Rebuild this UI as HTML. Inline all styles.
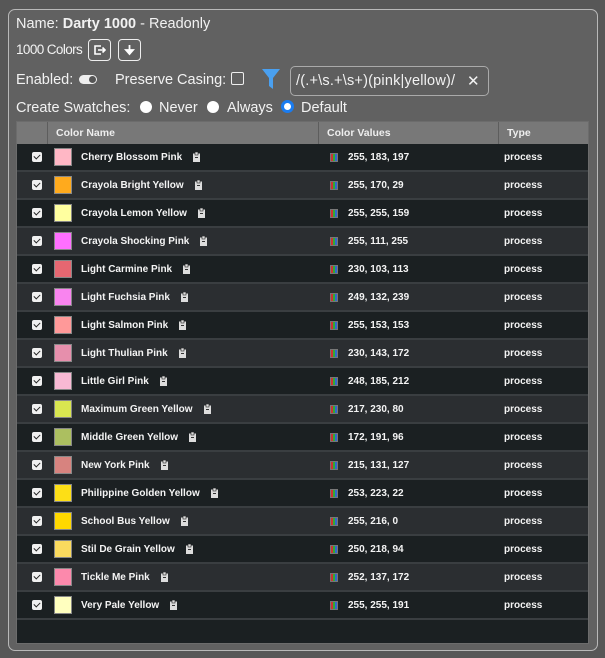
<!DOCTYPE html>
<html><head><meta charset="utf-8"><style>
*{box-sizing:border-box;margin:0;padding:0}
body{width:605px;height:658px;background:#575757;font-family:"Liberation Sans",sans-serif;color:#fff;position:relative;overflow:hidden}
.panel{position:absolute;left:8px;top:9px;width:590px;height:642px;border:1px solid #b8b8b8;border-radius:7px;background:#616161}
.t{position:absolute;font-size:14.5px;color:#f2f2f2;white-space:nowrap}
.btn{position:absolute;width:23px;height:22px;border:1px solid #eee;border-radius:4px}
.table{position:absolute;left:16px;top:121px;width:573px;height:523px;background:#1b2022;border:1px solid #6c6c6c}
.hdr{position:absolute;left:0;top:0;width:571px;height:22px;background:#787878;font-size:10.5px;font-weight:bold;color:#eee}
.hdr div{position:absolute;top:0;height:22px;line-height:22px;border-left:1px solid #5d5d5d;padding-left:8px}
.row{position:absolute;left:0;width:571px;height:28px;border-bottom:2px solid #3a3e41;font-size:10px;font-weight:bold;color:#f4f4f4}
.row span{position:absolute;top:1px;line-height:26px}
.cb{position:absolute;left:15px;top:8px;width:10px;height:10px;background:#f0f0f0;border-radius:2px}
.cb:after{content:"";position:absolute;left:3px;top:1px;width:3px;height:5px;border:solid #222;border-width:0 1.5px 1.5px 0;transform:rotate(45deg)}
.sw{position:absolute;left:37px;top:4px;width:18px;height:18px;border:1px solid #888}
.ic{position:absolute;left:313px;top:9px;width:8px;height:9px;background:linear-gradient(90deg,#c33 0 33%,#3a3 33% 66%,#36c 66%);border:1px solid #777}
.cl{position:absolute;top:8px}
</style></head><body>
<div class="panel"></div>
<div class="t" style="left:16px;top:16px">Name: <b>Darty 1000</b> - Readonly</div>
<div class="t" style="left:16px;top:42px;font-size:13.5px;letter-spacing:-0.6px">1000 Colors</div>
<div class="btn" style="left:88px;top:39px"><svg width="21" height="20" viewBox="0 0 21 20"><path d="M12 6H6v8h6M9 10h7M13.5 7.5L16 10l-2.5 2.5" fill="none" stroke="#fff" stroke-width="1.6"/></svg></div>
<div class="btn" style="left:118px;top:39px"><svg width="21" height="20" viewBox="0 0 21 20"><path d="M10.5 5v6M7 10l3.5 4 3.5-4z" fill="#fff" stroke="#fff" stroke-width="1.8"/></svg></div>
<div class="t" style="left:16px;top:72px">Enabled:</div>
<div style="position:absolute;left:79px;top:75px;width:18px;height:9px;border-radius:5px;background:#eee"><div style="position:absolute;right:1px;top:1px;width:7px;height:7px;border-radius:50%;background:#555"></div></div>
<div class="t" style="left:115px;top:72px">Preserve Casing:</div>
<div style="position:absolute;left:231px;top:72px;width:13px;height:13px;border:1.5px solid #eee;border-radius:2px"></div>
<svg style="position:absolute;left:261px;top:68px" width="20" height="22" viewBox="0 0 20 22"><path d="M1 1h18l-7 9v11l-4-3v-8z" fill="#4aa0f0"/></svg>
<div style="position:absolute;left:290px;top:66px;width:199px;height:30px;border:1px solid #aaa;border-radius:5px;background:#5e5e5e"></div>
<div class="t" style="left:296px;top:73px;font-size:14.5px;letter-spacing:0.2px">/(.+\s.+\s+)(pink|yellow)/</div>
<div class="t" style="left:467px;top:72px;font-size:15px">✕</div>
<div class="t" style="left:16px;top:100px">Create Swatches:</div>
<div style="position:absolute;left:140px;top:101px;width:12px;height:12px;border-radius:50%;background:#fff"></div>
<div class="t" style="left:159px;top:100px">Never</div>
<div style="position:absolute;left:207px;top:101px;width:12px;height:12px;border-radius:50%;background:#fff"></div>
<div class="t" style="left:227px;top:100px">Always</div>
<div style="position:absolute;left:281px;top:100px;width:13px;height:13px;border-radius:50%;background:#fff;border:3.5px solid #1a7cf0"></div>
<div class="t" style="left:301px;top:100px">Default</div>
<div class="table">
<div class="hdr"><div style="left:0;width:30px;border:none"></div><div style="left:30px;width:271px">Color Name</div><div style="left:301px;width:180px">Color Values</div><div style="left:481px;width:90px">Type</div></div>
<div id="rows"></div>
</div>
<script>
var d=[["Cherry Blossom Pink",255,183,197],["Crayola Bright Yellow",255,170,29],["Crayola Lemon Yellow",255,255,159],["Crayola Shocking Pink",255,111,255],["Light Carmine Pink",230,103,113],["Light Fuchsia Pink",249,132,239],["Light Salmon Pink",255,153,153],["Light Thulian Pink",230,143,172],["Little Girl Pink",248,185,212],["Maximum Green Yellow",217,230,80],["Middle Green Yellow",172,191,96],["New York Pink",215,131,127],["Philippine Golden Yellow",253,223,22],["School Bus Yellow",255,216,0],["Stil De Grain Yellow",250,218,94],["Tickle Me Pink",252,137,172],["Very Pale Yellow",255,255,191]];
var h="";var c=document.createElement("canvas").getContext("2d");c.font="bold 10px Liberation Sans";
var clip='<svg width="7" height="10" viewBox="0 0 7 10"><rect x="0" y="1.5" width="7" height="8.5" fill="#ddd"/><rect x="2" y="0" width="3" height="3" fill="#ddd" stroke="#222" stroke-width="0.6"/><rect x="2" y="5" width="3" height="1" fill="#333"/></svg>';
d.forEach(function(r,i){var w=c.measureText(r[0]).width;h+='<div class="row" style="top:'+(22+i*28)+'px;background:'+(i%2?'#2b2e31':'#1b2022')+'"><div class="cb"></div><div class="sw" style="background:rgb('+r[1]+','+r[2]+','+r[3]+')"></div><span style="left:64px">'+r[0]+'</span><div class="cl" style="left:'+(64+w+11)+'px">'+clip+'</div><div class="ic"></div><span style="left:331px">'+r[1]+', '+r[2]+', '+r[3]+'</span><span style="left:487px">process</span></div>';});
document.getElementById("rows").innerHTML=h;
</script>
</body></html>
